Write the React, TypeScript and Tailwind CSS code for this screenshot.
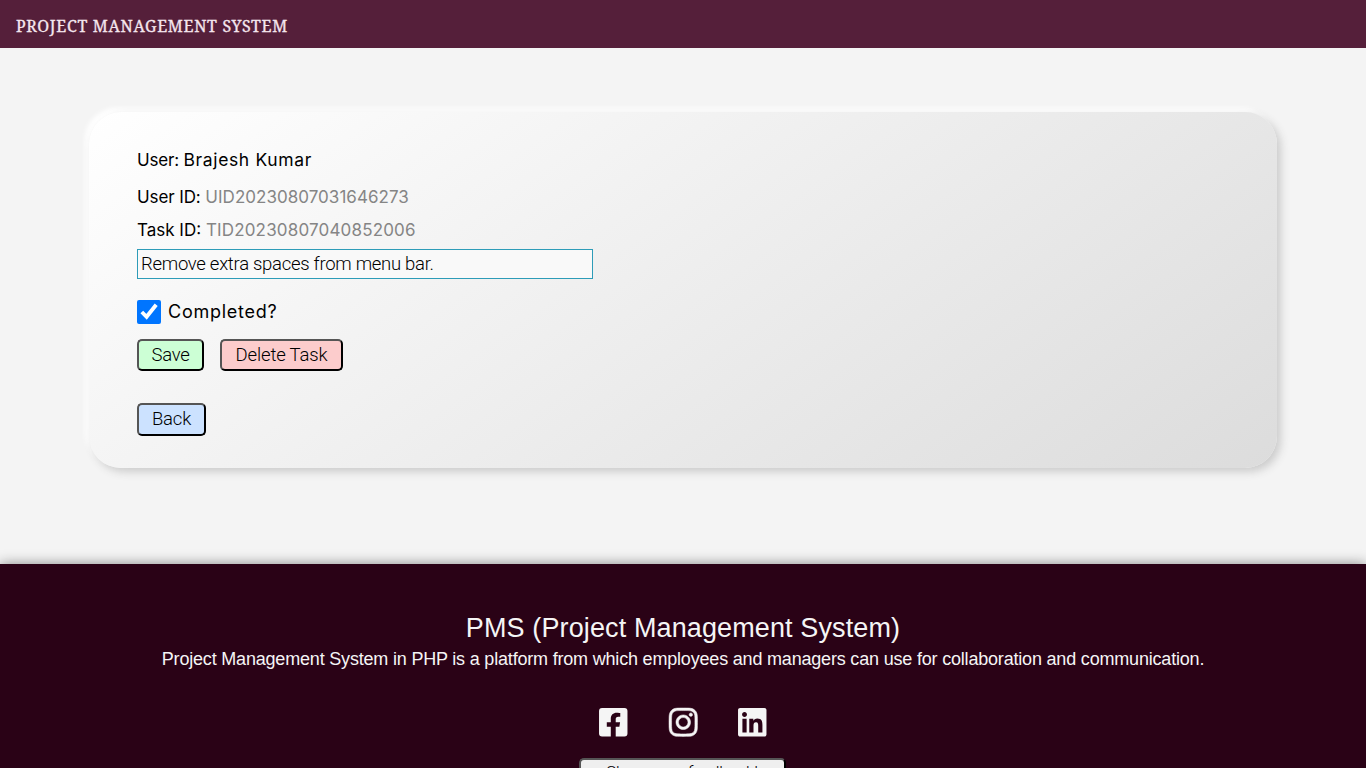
import React, { useState } from "react";
import { FaFacebookSquare, FaInstagram, FaLinkedin } from "react-icons/fa";

const buttonBase =
  "rounded-[5px] border-2 border-t-[#555] border-l-[#555] border-r-black border-b-black font-[Roboto,sans-serif] font-light text-black whitespace-nowrap";

function Header() {
  return (
    <header className="flex h-12 items-center bg-[#551f3a] px-4 pt-[4px]">
      <h1 className="whitespace-nowrap font-['Noto_Serif','DejaVu_Serif_Condensed','DejaVu_Serif',serif] text-[16px] tracking-[0.7px] text-[#f5e6ee] [-webkit-text-stroke:0.3px_#f5e6ee]">
        PROJECT MANAGEMENT SYSTEM
      </h1>
    </header>
  );
}

function TaskCard() {
  const [task, setTask] = useState("Remove extra spaces from menu bar.");
  const [completed, setCompleted] = useState(true);
  return (
    <section className="ml-[89px] mt-16 h-[356px] w-[1188px] rounded-[32px] bg-[linear-gradient(145deg,#ffffff,#dcdcdc)] px-12 pt-[35px] font-[Inter,sans-serif] text-[17px] text-black shadow-[4px_4px_8px_#cccccc,-4px_-4px_5px_#ffffff]">
      <p className="h-[26px] whitespace-nowrap leading-[26px]">
        <span className="tracking-[-0.2px]">User: </span>
        <span className="text-[17.5px] tracking-[0.65px]">Brajesh Kumar</span>
      </p>
      <p className="mt-[11px] h-[26px] whitespace-nowrap leading-[26px]">
        <span className="tracking-[-0.1px]">User ID: </span>
        <span className="tracking-[0.03px] text-[#858585]">UID20230807031646273</span>
      </p>
      <p className="mt-[7px] h-[26px] whitespace-nowrap leading-[26px]">
        Task ID: <span className="tracking-[0.17px] text-[#858585]">TID20230807040852006</span>
      </p>
      <input
        className="mt-[6px] block h-[30px] w-[456px] border border-[#2d9cb8] bg-[#f9f9f9] px-[3px] font-[Roboto,sans-serif] text-[18.5px] font-light tracking-[-0.28px] outline-none"
        value={task}
        onChange={(e) => setTask(e.target.value)}
      />
      <label className="mt-[21px] flex h-6 items-center gap-[7px]">
        <input
          type="checkbox"
          className="size-6 accent-[#0075ff]"
          checked={completed}
          onChange={(e) => setCompleted(e.target.checked)}
        />
        <span className="pb-px text-[18px] tracking-[0.75px]">Completed?</span>
      </label>
      <div className="mt-[15px] flex gap-4">
        <button className={`${buttonBase} h-8 w-[67px] bg-[#ccffd5] pt-px text-[18.5px] tracking-[-0.25px]`}>Save</button>
        <button className={`${buttonBase} h-8 w-[123px] bg-[#fccccc] pt-px text-[18.5px] tracking-[-0.15px]`}>Delete Task</button>
      </div>
      <button className={`${buttonBase} mt-8 block h-[33px] w-[69px] bg-[#cce2ff] pt-px text-[18.5px] tracking-[-0.2px]`}>Back</button>
    </section>
  );
}

function Footer() {
  return (
    <footer className="mt-24 flex h-[204px] flex-col items-center overflow-hidden bg-[#2a0216] pt-[47px] font-['Liberation_Sans',sans-serif] text-[#f5f5f5]">
      <h2 className="whitespace-nowrap pt-px text-[27px] leading-[33px] tracking-[0.12px]">PMS (Project Management System)</h2>
      <p className="mt-[2px] whitespace-nowrap text-[18px] leading-6 tracking-[-0.19px]">
        Project Management System in PHP is a platform from which employees and managers can use for collaboration and communication.
      </p>
      <div className="mt-[35px] flex shrink-0 items-start gap-[37px] text-[32.5px]">
        <FaFacebookSquare />
        <FaInstagram stroke="currentColor" strokeWidth={8} />
        <FaLinkedin />
      </div>
      <button className={`${buttonBase} mr-[2px] mt-[19.5px] h-8 w-[207px] shrink-0 bg-[#efefef] pb-[5px] text-[17px] tracking-[-0.2px]`}>
        Share your feedback!
      </button>
    </footer>
  );
}

export default function App() {
  return (
    <div className="h-screen overflow-hidden bg-[#f4f4f4]">
      <Header />
      <TaskCard />
      <div className="shadow-[0_0_12px_#888]">
        <Footer />
      </div>
    </div>
  );
}
